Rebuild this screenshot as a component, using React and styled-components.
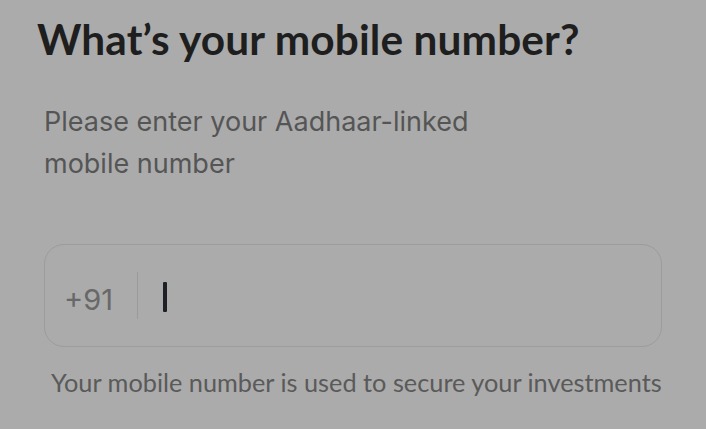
import React from "react";
import styled, { createGlobalStyle } from "styled-components";

const GlobalStyle = createGlobalStyle`
  html, body {
    margin: 0;
    padding: 0;
    background: #ababab;
  }
  body {
    font-family: Inter, "Noto Sans", sans-serif;
    -webkit-font-smoothing: antialiased;
  }
`;

const Page = styled.main`
  width: 706px;
  height: 429px;
  overflow: hidden;
  display: flex;
  flex-direction: column;
  padding: 14px 44px 0 44px;
  box-sizing: border-box;
`;

const Title = styled.h1`
  margin: 0 0 0 -7px;
  font-family: Lato, "Noto Sans", sans-serif;
  font-weight: 700;
  font-size: 42.4px;
  line-height: 50px;
  letter-spacing: 0.1px;
  color: #1e1e1e;
  white-space: nowrap;
`;

const Subtitle = styled.p`
  margin: 37px 0 0 0;
  width: 440px;
  font-family: Inter, "Noto Sans", sans-serif;
  font-weight: 400;
  font-size: 27px;
  line-height: 42px;
  color: #555555;
`;

const Field = styled.label`
  margin-top: 59px;
  height: 103px;
  box-sizing: border-box;
  border: 1.5px solid #9c9c9c;
  border-radius: 20px;
  display: flex;
  align-items: center;
  padding-left: 19px;
`;

const Prefix = styled.span`
  padding-top: 7px;
  font-family: Inter, "Noto Sans", sans-serif;
  font-size: 29px;
  color: #686868;
`;

const Divider = styled.span`
  width: 1.5px;
  height: 47px;
  background: #9a9a9a;
  margin: 0 25px 0 24px;
`;

const Caret = styled.span`
  width: 4px;
  height: 30px;
  margin-top: 3px;
  border-radius: 1px;
  background: #1d2126;
`;

const Helper = styled.p`
  margin: 20px 0 0 0;
  padding-left: 7px;
  font-family: Lato, "Noto Sans", sans-serif;
  font-weight: 400;
  font-size: 25.3px;
  line-height: 30px;
  color: #5a5a5a;
  white-space: nowrap;
`;

export default function App() {
  return (
    <>
      <GlobalStyle />
      <Page>
        <Title>What’s your mobile number?</Title>
        <Subtitle>Please enter your Aadhaar-linked mobile number</Subtitle>
        <Field>
          <Prefix>+91</Prefix>
          <Divider />
          <Caret />
        </Field>
        <Helper>Your mobile number is used to secure your investments</Helper>
      </Page>
    </>
  );
}
